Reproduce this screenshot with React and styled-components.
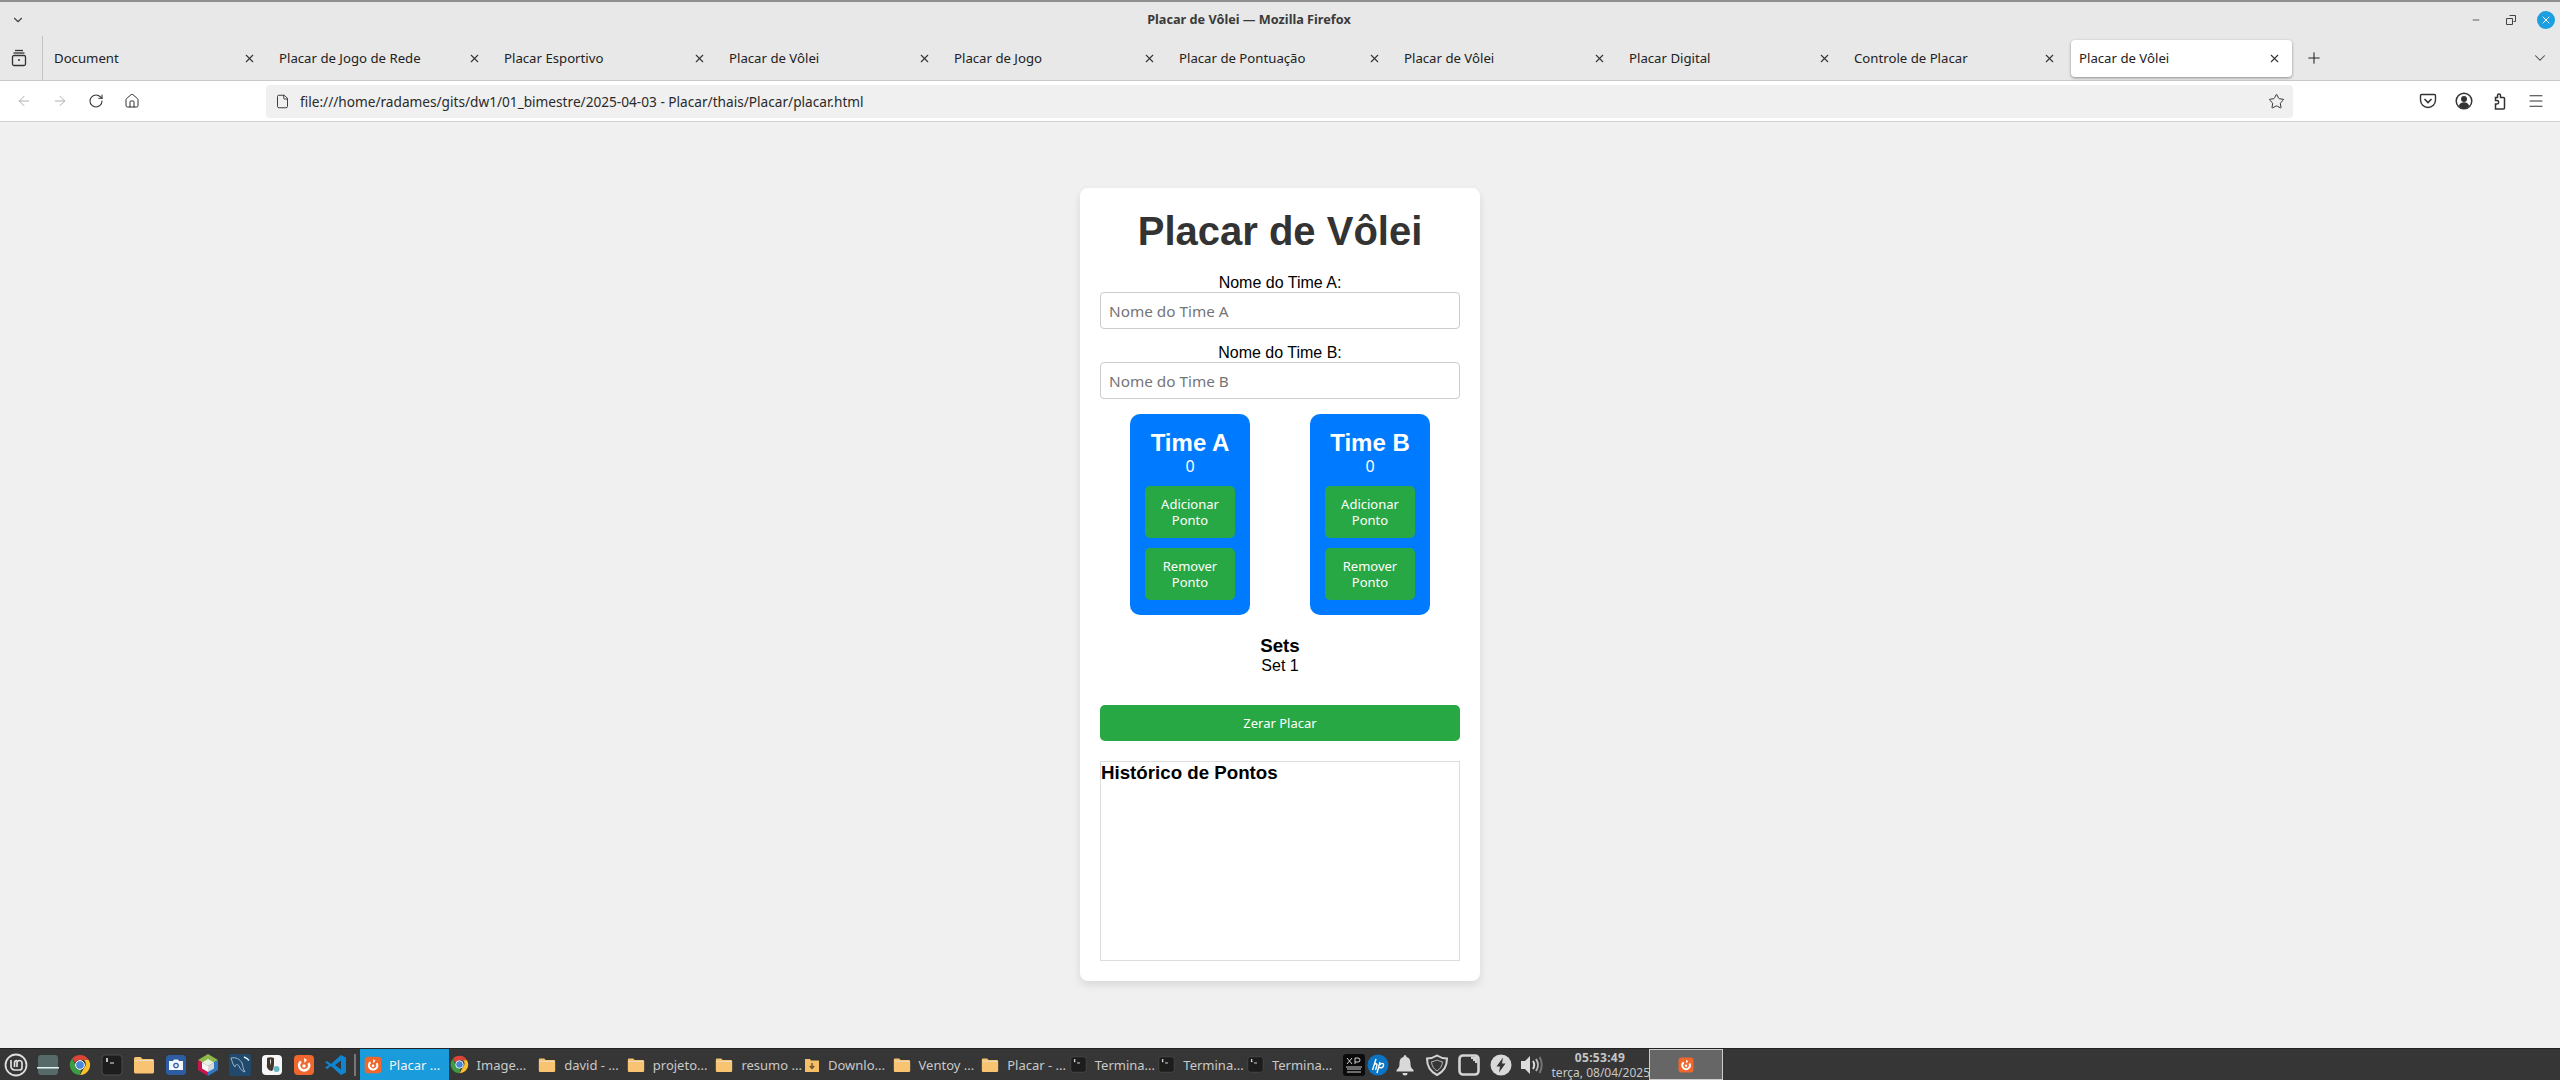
import React from "react";
import styled, { createGlobalStyle } from "styled-components";
import { ArrowLeft, ArrowRight, RotateCw, Home, File, Star, Menu, X, Plus, ChevronDown, Minus } from "lucide-react";

const Global = createGlobalStyle`
  html, body { margin: 0; padding: 0; background: #f0f0f0; }
  * { box-sizing: border-box; }
  #root { width: 2560px; height: 1080px; overflow: hidden; }
`;

const UI = `"Noto Sans", "Open Sans", sans-serif`;
const WEB = `"Liberation Sans", Arial, sans-serif`;

const Desktop = styled.div`display:flex;flex-direction:column;width:2560px;height:1080px;background:#f0f0f0;`;

const TitleBar = styled.header`
  display:flex;align-items:center;justify-content:space-between;height:36px;padding:2px 5px 0 11px;
  background:#e8e8e8;border-top:2px solid #8f8f8f;
`;
const WindowTitle = styled.div`font:700 12.7px ${UI};color:#3a3a3a;margin:0 0 2px 6px;`;
const WindowButtons = styled.div`display:flex;align-items:center;gap:17px;`;
const WinBtn = styled.span`display:flex;width:18px;justify-content:center;color:#444;`;
const CloseCircle = styled.span`display:flex;align-items:center;justify-content:center;width:18px;height:18px;border-radius:50%;background:#1c9ee0;color:#fff;`;

const TabBar = styled.div`display:flex;align-items:center;height:45px;background:#e8e8e8;border-bottom:1px solid #c9c9c9;`;
const TabsButton = styled.div`display:flex;align-items:center;justify-content:center;width:43px;height:44px;border-right:1px solid #c4c4c4;margin-right:1px;color:#333;padding-right:4px;`;
const Tab = styled.div`
  display:flex;align-items:center;justify-content:space-between;width:221px;height:37px;margin:0 2px;padding:0 11px 0 8px;
  font:13.2px ${UI};color:#222;border-radius:4px;
  background:${p => (p.$active ? "#fff" : "transparent")};
  box-shadow:${p => (p.$active ? "0 1px 3px rgba(0,0,0,.4)" : "none")};
`;
const NewTab = styled.div`display:flex;margin-left:11px;color:#222;`;
const TabEnd = styled.div`display:flex;margin-left:auto;margin-right:11px;color:#444;`;

const NavBar = styled.nav`display:flex;align-items:center;height:41px;background:#fff;border-bottom:1px solid #d0d0d0;padding:0 14px 0 16px;`;
const NavIcons = styled.div`display:flex;align-items:center;gap:20px;width:250px;color:#333;`;
const NavIcon = styled.span`display:flex;color:${p => (p.$dim ? "#aaa" : "#333")};`;
const UrlBar = styled.div`
  display:flex;align-items:center;gap:10px;width:2027px;height:33px;padding:0 8px 0 9px;background:#f0f0f0;border-radius:4px;
  font:13.65px ${UI};color:#2a2a2a;
`;
const UrlText = styled.span`flex:1;`;
const Tools = styled.div`display:flex;align-items:center;gap:18px;margin-left:auto;margin-right:1px;color:#333;`;

const Main = styled.main`flex:1;display:flex;align-items:center;justify-content:center;min-height:0;padding-bottom:1px;`;
const Card = styled.section`
  width:400px;padding:20px;background:#fff;border-radius:8px;box-shadow:0 4px 8px rgba(0,0,0,.1);
  font:16px/18px ${WEB};color:#000;text-align:center;
`;
const Title = styled.h1`margin:0 0 20px;font:700 40px/46px ${WEB};color:#333;`;
const Label = styled.label`display:block;height:18px;margin-top:1px;`;
const NameInput = styled.input`
  display:block;width:100%;height:37px;margin:0 0 15px;padding:0 8px;border:1px solid #ccc;border-radius:4px;background:#fff;
  font:15.3px ${UI};color:#222;outline:none;
  &::placeholder{color:#757575;opacity:1;}
`;
const Teams = styled.div`display:flex;justify-content:center;gap:60px;`;
const Team = styled.div`width:120px;padding:15px;background:#007bff;border-radius:10px;color:#fff;`;
const TeamName = styled.h2`margin:0;font:700 24px/28px ${WEB};`;
const Score = styled.div`margin-bottom:11px;line-height:18px;font-family:${UI};font-size:16px;`;
const PointButton = styled.button`
  display:block;width:90px;height:52px;margin:0 0 10px;padding:10px 5px;border:none;border-radius:5px;background:#28a745;color:#fff;
  font:13px/16px ${UI};&:last-child{margin-bottom:0;}
`;
const SetsBox = styled.div`margin:20px 0 30.5px;`;
const SectionTitle = styled.h3`margin:0;font:700 18.72px/21.5px ${WEB};`;
const SetLine = styled.div`line-height:18px;`;
const ResetButton = styled.button`
  display:block;width:100%;height:36px;padding:0;border:none;border-radius:5px;background:#28a745;color:#fff;font:13px ${UI};
`;
const History = styled.div`height:200px;margin-top:20px;border:1px solid #ddd;text-align:left;overflow:hidden;`;

const Taskbar = styled.footer`display:flex;align-items:center;height:32px;background:#363636;border-top:1px solid #222;`;
const Launchers = styled.div`display:flex;align-items:center;width:352px;`;
const Launcher = styled.span`display:flex;align-items:center;justify-content:center;width:32px;height:31px;`;
const Sep = styled.span`width:2px;height:22px;background:#777;margin:0 4px 0 2px;`;
const WindowItem = styled.div`
  display:flex;align-items:center;gap:${p => (p.$active ? "6px" : "8px")};width:88.6px;height:31px;padding-left:${p => (p.$active ? "3px" : "1px")};
  background:${p => (p.$active ? "#1a9bdb" : "transparent")};
  color:${p => (p.$active ? "#f2f2f2" : "#c9c9c9")};font:13px ${UI};white-space:nowrap;
`;
const Tray = styled.div`display:flex;align-items:center;margin-left:6px;`;
const TrayIcon = styled.span`display:flex;align-items:center;justify-content:center;width:${p => p.$w || 32}px;`;
const Clock = styled.div`width:97px;margin-left:7px;text-align:center;font:12px/15px ${UI};color:#c6c6c6;white-space:nowrap;`;
const ClockTime = styled.div`font-weight:700;letter-spacing:.3px;`;
const Preview = styled.div`display:flex;align-items:center;justify-content:center;width:74px;height:31px;background:#666;border:1px solid #ccc;`;

const Svg = ({ s = 24, children }) => <svg width={s} height={s} viewBox={`0 0 ${s} ${s}`}>{children}</svg>;

const Mint = () => <Svg>
  <circle cx="12" cy="12" r="10.5" fill="none" stroke="#ddd" strokeWidth="1.8"/>
  <path d="M7 7v6.5a3.5 3.5 0 0 0 3.5 3.5h5a2.5 2.5 0 0 0 2.5-2.5V10a2.5 2.5 0 0 0-5 0v4M10.5 14v-4a2.5 2.5 0 0 1 2.5-2.5" fill="none" stroke="#ddd" strokeWidth="1.7"/>
</Svg>;
const Monitor = () => <Svg>
  <rect x="2" y="2" width="20" height="20" rx="3" fill="#566a6a"/><rect x="1" y="14" width="22" height="1.5" fill="#e6f3f3"/>
</Svg>;
const Chrome = ({ s = 22 }) => <svg width={s} height={s} viewBox="0 0 22 22">
  <path d="M11 1a10 10 0 0 1 8.700 5H11a5 5 0 0 0-4.600 3L3.200 4.600A10 10 0 0 1 11 1z" fill="#db4437"/>
  <path d="M19.700 6A10 10 0 0 1 11 21l4.300-7.500A5 5 0 0 0 15 6z" fill="#fbc02d"/>
  <path d="M3.200 4.600 7.400 12.500A5 5 0 0 0 12 16l-1 5A10 10 0 0 1 3.200 4.600z" fill="#3e9b45"/>
  <circle cx="11" cy="11" r="4.400" fill="#4a86d8" stroke="#fff" strokeWidth="1"/>
</svg>;
const Term = ({ s = 22 }) => <svg width={s} height={s} viewBox="0 0 22 22">
  <rect x="1" y="1" width="20" height="20" rx="3.5" fill="#1d1d1d" stroke="#555" strokeWidth=".8"/>
  <path d="M5 5h2M5 7h2M6 4v4M9 9h4" stroke="#eee" strokeWidth="1.1" fill="none"/>
</svg>;
const Folder = ({ s = 22 }) => <svg width={s} height={s} viewBox="0 0 22 22">
  <path d="M1 4.500A1.500 1.500 0 0 1 2.500 3h5l2 2h10A1.500 1.500 0 0 1 21 6.500V18a1.500 1.500 0 0 1-1.500 1.500h-17A1.500 1.500 0 0 1 1 18z" fill="#f8c471"/>
  <rect x="2" y="6" width="18" height="1.200" fill="#e8dcc4"/>
</svg>;
const DownloadFolder = ({ s = 16 }) => <svg width={s} height={s} viewBox="0 0 16 16">
  <path d="M1 2h5l1 1.500h8V15H1z" fill="#f5be68"/><path d="M8 6v5M5.800 9 8 11.500 10.200 9" stroke="#6b5330" strokeWidth="1.400" fill="none"/>
</svg>;
const Camera = () => <Svg>
  <rect x="2" y="2" width="20" height="20" rx="3.500" fill="#2e5da3"/>
  <path d="M5 8h4l1-1.500h4L15 8h4v9H5z" fill="#f3f6fb"/><circle cx="12" cy="12.500" r="2.800" fill="#2e5da3"/><circle cx="12" cy="12.500" r="1.500" fill="#f3f6fb"/>
</Svg>;
const Cube = () => <Svg>
  <path d="M12 1 22 7 12 13 2 7z" fill="#8db84a"/><path d="M2 7l10 6v10L2 17z" fill="#c8174f"/><path d="M22 7 12 13v10l10-6z" fill="#2e78c4"/>
  <path d="M12 6l6 3.500-6 3.500-6-3.500z" fill="#e9f2e0"/><path d="M6 9.500l6 3.500v6l-6-3.500z" fill="#f6f6f6"/><path d="M18 9.500 12 13v6l6-3.500z" fill="#d8d8d8"/>
</Svg>;
const Dolphin = () => <Svg>
  <rect x="1" y="1" width="22" height="22" rx="2" fill="#21496b"/>
  <path d="M3 5c5-1 9 1 11 5 1 3 1 6 3 9-3-1-5-3-6-6-1-2-4-2-4 1-2-2-3-6-4-9z" fill="none" stroke="#a8c2d6" strokeWidth=".9"/>
  <path d="M16 4l3 1.500 2 2" stroke="#e6eef4" strokeWidth="1.500" fill="none"/>
</Svg>;
const Photo = () => <Svg>
  <rect x="2" y="2" width="20" height="20" rx="4" fill="#f7f7f7"/>
  <path d="M7 5c2-1 5-1 7 0v6c0 3-1 6-2 7-3 0-6-3-5-7z" fill="#43372d"/><path d="M10 6c1 0 1.500 3 0 6z" fill="#eee"/>
  <circle cx="16.500" cy="16" r="3" fill="#68b6c4"/>
</Svg>;
const Firefoxy = ({ s = 24 }) => <svg width={s} height={s} viewBox="0 0 24 24">
  <rect x="2" y="2" width="20" height="20" rx="4" fill="#f0672d"/>
  <path d="M9 8.500A5 5 0 1 0 16.500 10" fill="none" stroke="#fff" strokeWidth="2.600"/>
  <path d="M12 5l3 2-2.500 3z" fill="#fff"/><circle cx="12" cy="13" r="1.700" fill="#fff"/>
</svg>;
const VSCode = () => <Svg>
  <path d="M17 2 22 4.500v15L17 22 7 13l-4 3-2-1.500L5 12 1 9.500 3 8l4 3z" fill="#0f85d1"/><path d="M17 7.500 11 12l6 4.500z" fill="#363636"/>
</Svg>;
const XpPen = () => <svg width="22" height="22" viewBox="0 0 22 22">
  <rect x="0" y="0" width="22" height="22" rx="3" fill="#0b0b0b"/>
  <path d="M4 4l5 6M9 4l-5 6M12 10V4h3a2 2 0 0 1 0 4h-3M3 13h16M4 15h14M4 18h14" stroke="#e4e4e4" strokeWidth=".9" fill="none"/>
</svg>;
const Hp = () => <svg width="22" height="22" viewBox="0 0 22 22">
  <circle cx="11" cy="11" r="10.500" fill="#0b74c4"/>
  <path d="M9 5 5.500 16M7 11c1-1.500 3-2 3 0l-1.500 5M13 8l-3 11M13 11c1-2 4-2.500 3.500.5-.5 2.500-3 3-4 1.500" stroke="#fff" strokeWidth="1.400" fill="none"/>
</svg>;
const Bell = () => <svg width="20" height="22" viewBox="0 0 20 22">
  <path d="M10 1a2 2 0 0 1 1.500 2C15 4 15.500 7 15.500 10c0 3 1 4.500 3 6v1.500h-17V16c2-1.500 3-3 3-6 0-3 .5-6 4-7A2 2 0 0 1 10 1z" fill="#d9d9d9"/><path d="M7.500 19h5a2.500 2.500 0 0 1-5 0z" fill="#d9d9d9"/>
</svg>;
const Shield = () => <svg width="24" height="24" viewBox="0 0 24 24">
  <path d="M12 2.500C15 4.500 18 5.500 22 5.500 22 13 18 19 12 22 6 19 2 13 2 5.500 6 5.500 9 4.500 12 2.500z" fill="none" stroke="#d4d4d4" strokeWidth="2"/>
  <path d="M12 7c2 1 3.500 1.500 5.500 1.800C17.300 13 15 16 12 18 9 16 6.700 13 6.500 8.800 8.500 8.500 10 8 12 7z" fill="none" stroke="#d4d4d4" strokeWidth=".8"/>
</svg>;
const Chip = () => <svg width="22" height="22" viewBox="0 0 22 22">
  <rect x="1.500" y="1.500" width="19" height="19" rx="3.500" fill="none" stroke="#d4d4d4" strokeWidth="2.600"/>
  <path d="M13 2.500h6.500V9H17V7h-2V5h-2z" fill="#d4d4d4"/>
</svg>;
const Bolt = () => <svg width="22" height="22" viewBox="0 0 22 22">
  <circle cx="11" cy="11" r="10.500" fill="#d9d9d9"/><path d="M13 3.500 6.500 12.500H10L9 18.500 15.500 9.500H12z" fill="#363636"/>
</svg>;
const Speaker = () => <svg width="24" height="24" viewBox="0 0 24 24">
  <path d="M2 8h4l5-5v18l-5-5H2z" fill="#dcdcdc"/>
  <path d="M14 8c1.500 2.500 1.500 5.500 0 8" fill="none" stroke="#dcdcdc" strokeWidth="2"/>
  <path d="M17 6c2.500 3.500 2.500 8.500 0 12" fill="none" stroke="#bbb" strokeWidth="2"/>
  <path d="M20.500 4c3 4.500 3 11 0 16" fill="none" stroke="#777" strokeWidth="2"/>
</svg>;
const TabGroup = () => <svg width="16" height="18" viewBox="0 0 16 18" fill="none" stroke="#333" strokeWidth="1.300">
  <path d="M4 1.500h8"/><path d="M2.500 4h11"/><rect x="1.500" y="6.500" width="13" height="10" rx="1.500"/><path d="M7 11h2" strokeWidth="1.500"/>
</svg>;
const Pocket = () => <svg width="18" height="18" viewBox="0 0 18 18" fill="none" stroke="#333" strokeWidth="1.400">
  <path d="M2.500 2.500h13a1 1 0 0 1 1 1V8a7.500 7.500 0 0 1-15 0V3.500a1 1 0 0 1 1-1z"/><path d="M5.500 7 9 10.500 12.500 7" strokeWidth="1.600"/>
</svg>;
const Profile = () => <svg width="18" height="18" viewBox="0 0 18 18">
  <circle cx="9" cy="9" r="7.800" fill="none" stroke="#333" strokeWidth="1.500"/><circle cx="9" cy="7" r="3" fill="#333"/><path d="M3.800 14c1-3 3-3.800 5.200-3.800s4.200.8 5.200 3.800A7 7 0 0 1 9 16.500 7 7 0 0 1 3.800 14z" fill="#333"/>
</svg>;
const Extension = () => <svg width="18" height="18" viewBox="0 0 18 18" fill="none" stroke="#333" strokeWidth="1.500">
  <path d="M9.500 5.500h3a1 1 0 0 1 1 1v9.500a1 1 0 0 1-1 1H4.500V12h1.500a1.700 1.700 0 0 0 0-3.400H4.500V5.500h2V3.500a1.500 1.500 0 0 1 3 0z"/>
</svg>;

const tabs = ["Document", "Placar de Jogo de Rede", "Placar Esportivo", "Placar de Vôlei", "Placar de Jogo", "Placar de Pontuação", "Placar de Vôlei", "Placar Digital", "Controle de Placar"];
const launchers = [Mint, Monitor, Chrome, Term, Folder, Camera, Cube, Dolphin, Photo, Firefoxy, VSCode];
const windows = [
  [Chrome, "Image...", 19], [Folder, "david - ...", 18], [Folder, "projeto...", 18], [Folder, "resumo ...", 18],
  [DownloadFolder, "Downlo...", 16], [Folder, "Ventoy ...", 18], [Folder, "Placar - ...", 18],
  [Term, "Termina...", 17], [Term, "Termina...", 17], [Term, "Termina...", 17],
];

function TeamCard({ name }) {
  return (
    <Team>
      <TeamName>{name}</TeamName>
      <Score>0</Score>
      <PointButton>Adicionar Ponto</PointButton>
      <PointButton>Remover Ponto</PointButton>
    </Team>
  );
}

export default function App() {
  return (
    <Desktop>
      <Global />
      <TitleBar>
        <ChevronDown size={14} color="#444" />
        <WindowTitle>Placar de Vôlei — Mozilla Firefox</WindowTitle>
        <WindowButtons>
          <WinBtn><Minus size={10} /></WinBtn>
          <WinBtn><svg width="10" height="10" viewBox="0 0 10 10" fill="none" stroke="#444"><path d="M3.500.5h6v6h-2M.5 3.500h6v6h-6z"/></svg></WinBtn>
          <CloseCircle><X size={12} /></CloseCircle>
        </WindowButtons>
      </TitleBar>
      <TabBar>
        <TabsButton><TabGroup /></TabsButton>
        {tabs.map((t, i) => <Tab key={i}>{t}<X size={13} color="#333" /></Tab>)}
        <Tab $active>Placar de Vôlei<X size={13} color="#333" /></Tab>
        <NewTab><Plus size={18} strokeWidth={1.4} /></NewTab>
        <TabEnd><ChevronDown size={18} strokeWidth={1.4} /></TabEnd>
      </TabBar>
      <NavBar>
        <NavIcons>
          <NavIcon $dim><ArrowLeft size={16} strokeWidth={1.4} /></NavIcon>
          <NavIcon $dim><ArrowRight size={16} strokeWidth={1.4} /></NavIcon>
          <NavIcon><RotateCw size={16} strokeWidth={1.6} /></NavIcon>
          <NavIcon><Home size={16} strokeWidth={1.5} /></NavIcon>
        </NavIcons>
        <UrlBar>
          <File size={15} strokeWidth={1.5} color="#333" />
          <UrlText>file:///home/radames/gits/dw1/01_bimestre/2025-04-03 - Placar/thais/Placar/placar.html</UrlText>
          <Star size={17} strokeWidth={1.4} color="#333" />
        </UrlBar>
        <Tools>
          <Pocket /><Profile /><Extension /><Menu size={18} strokeWidth={1.4} />
        </Tools>
      </NavBar>
      <Main>
        <Card>
          <Title>Placar de Vôlei</Title>
          <Label>Nome do Time A:</Label>
          <NameInput placeholder="Nome do Time A" />
          <Label>Nome do Time B:</Label>
          <NameInput placeholder="Nome do Time B" />
          <Teams>
            <TeamCard name="Time A" />
            <TeamCard name="Time B" />
          </Teams>
          <SetsBox>
            <SectionTitle>Sets</SectionTitle>
            <SetLine>Set 1</SetLine>
          </SetsBox>
          <ResetButton>Zerar Placar</ResetButton>
          <History><SectionTitle>Histórico de Pontos</SectionTitle></History>
        </Card>
      </Main>
      <Taskbar>
        <Launchers>
          {launchers.map((L, i) => <Launcher key={i}><L /></Launcher>)}
        </Launchers>
        <Sep />
        <WindowItem $active><Firefoxy s={20} />Placar ...</WindowItem>
        {windows.map(([I, t, s], i) => <WindowItem key={i}><I s={s} />{t}</WindowItem>)}
        <Tray>
          <TrayIcon $w={26}><XpPen /></TrayIcon>
          <TrayIcon $w={22}><Hp /></TrayIcon>
          <TrayIcon><Bell /></TrayIcon>
          <TrayIcon><Shield /></TrayIcon>
          <TrayIcon><Chip /></TrayIcon>
          <TrayIcon><Bolt /></TrayIcon>
          <TrayIcon $w={28}><Speaker /></TrayIcon>
        </Tray>
        <Clock><ClockTime>05:53:49</ClockTime>terça, 08/04/2025</Clock>
        <Preview><Firefoxy s={18} /></Preview>
      </Taskbar>
    </Desktop>
  );
}
